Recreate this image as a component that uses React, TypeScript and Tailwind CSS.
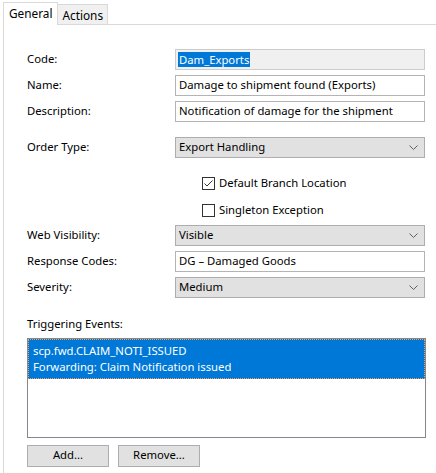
import { useState } from "react";

const FONT = "font-['Segoe_UI','Noto_Sans',sans-serif]";

function Chevron() {
  return (
    <svg width="9" height="5" viewBox="0 0 9 5" className="shrink-0">
      <path d="M0.5 0.5 L4.5 4.5 L8.5 0.5" fill="none" stroke="#606060" strokeWidth="1" />
    </svg>
  );
}

function Field({ label, children, className = "" }: { label: string; children: React.ReactNode; className?: string }) {
  return (
    <div className={`flex items-center ${className}`}>
      <span className="w-[148px] shrink-0">{label}</span>
      {children}
    </div>
  );
}

function TextBox({ value, readOnly }: { value: string; readOnly?: boolean }) {
  return (
    <div
      className={`flex h-[21px] w-[250px] items-center border px-[2px] ${
        readOnly ? "border-[#cccccc] bg-[#f0f0f0]" : "border-[#b4b4b4] bg-white"
      }`}
    >
      {readOnly ? <span className="bg-[#0078d7] px-[1px] leading-[15px] text-white">{value}</span> : <span className="px-[1px]">{value}</span>}
    </div>
  );
}

function Select({ value }: { value: string }) {
  return (
    <div className="flex h-[21px] w-[250px] items-center justify-between border border-[#adadad] bg-[#e1e1e1] pl-[3px] pr-[6px]">
      <span>{value}</span>
      <Chevron />
    </div>
  );
}

function Check({ label, checked }: { label: string; checked?: boolean }) {
  return (
    <div className="flex h-[17px] items-center gap-[4px] pl-[175px]">
      <span className="flex h-[13px] w-[13px] items-center justify-center border border-[#333333] bg-white">
        {checked && (
          <svg width="11" height="11" viewBox="0 0 11 11">
            <path d="M1.5 5.5 L4 8 L9.5 2.5" fill="none" stroke="#333333" strokeWidth="1" />
          </svg>
        )}
      </span>
      <span>{label}</span>
    </div>
  );
}

export default function App() {
  const [tab, setTab] = useState("General");

  return (
    <div className={`h-[473px] w-[436px] overflow-hidden bg-white text-[11.3px] text-black ${FONT}`}>
      <div className="flex h-[24px] items-end pl-[3px] text-[11.8px]">
        <button
          onClick={() => setTab("General")}
          className={`relative -mb-px h-[23px] border border-b-0 border-[#d9d9d9] px-[5px] ${
            tab === "General" ? "z-10 bg-white" : "bg-[#f0f0f0]"
          }`}
        >
          General
        </button>
        <button
          onClick={() => setTab("Actions")}
          className="h-[20px] border border-b-0 border-l-0 border-[#d9d9d9] bg-[#f0f0f0] px-[4px] leading-[18px]"
        >
          Actions
        </button>
      </div>

      <div className="ml-[3px] h-[449px] border-l border-t border-[#d9d9d9] pl-[23px] pt-[24px]">
        <div className="flex flex-col gap-[5px]">
          <Field label="Code:">
            <TextBox value="Dam_Exports" readOnly />
          </Field>
          <Field label="Name:">
            <TextBox value="Damage to shipment found (Exports)" />
          </Field>
          <Field label="Description:">
            <TextBox value="Notification of damage for the shipment" />
          </Field>
        </div>

        <Field label="Order Type:" className="mt-[15px]">
          <Select value="Export Handling" />
        </Field>

        <div className="mt-[17px] flex flex-col gap-[10px]">
          <Check label="Default Branch Location" checked />
          <Check label="Singleton Exception" />
        </div>

        <div className="mt-[6px] flex flex-col gap-[5px]">
          <Field label="Web Visibility:">
            <Select value="Visible" />
          </Field>
          <Field label="Response Codes:">
            <TextBox value="DG – Damaged Goods" />
          </Field>
          <Field label="Severity:">
            <Select value="Medium" />
          </Field>
        </div>

        <div className="mt-[18px]">Triggering Events:</div>

        <div className="mt-[5px] h-[100px] w-[399px] border border-[#828790] bg-white">
          <div className="border border-dotted border-[#f0a050] bg-[#0078d7] px-[4px] py-[3px] leading-[16px] text-white">
            <div>scp.fwd.CLAIM_NOTI_ISSUED</div>
            <div>Forwarding: Claim Notification issued</div>
          </div>
        </div>

        <div className="mt-[7px] flex gap-[9px]">
          <button className="h-[22px] w-[82px] border border-[#adadad] bg-[#e1e1e1]">Add...</button>
          <button className="h-[22px] w-[82px] border border-[#adadad] bg-[#e1e1e1]">Remove...</button>
        </div>
      </div>
    </div>
  );
}
